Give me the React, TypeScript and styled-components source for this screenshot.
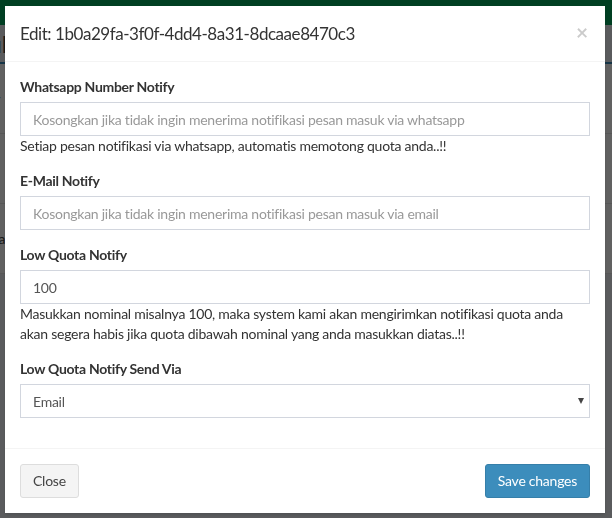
import React from "react";
import styled, { createGlobalStyle } from "styled-components";

const GlobalStyle = createGlobalStyle`
  * { box-sizing: border-box; }
  html, body {
    margin: 0;
    padding: 0;
    background: #ecf0f5;
    font-family: "Lato", "Liberation Sans", sans-serif;
    font-size: 14px;
    color: #333;
    overflow: hidden;
  }
`;

const fields = {
  whatsapp: "Kosongkan jika tidak ingin menerima notifikasi pesan masuk via whatsapp",
  email: "Kosongkan jika tidak ingin menerima notifikasi pesan masuk via email",
};

const App: React.FC = () => {
  return (
    <>
      <GlobalStyle />
      <Page>
        <Navbar />
        <ContentHeader>
          <PageTitle>Notifikasi</PageTitle>
        </ContentHeader>
        <Box>
          <Row>nomor</Row>
          <Row>e-mail</Row>
          <Row>nominal</Row>
        </Box>
      </Page>

      <Backdrop />

      <ModalWrap>
        <Modal>
          <Header>
            <Title>Edit: 1b0a29fa-3f0f-4dd4-8a31-8dcaae8470c3</Title>
            <CloseX>×</CloseX>
          </Header>

          <Body>
            <FormGroup>
              <Label>Whatsapp Number Notify</Label>
              <Input placeholder={fields.whatsapp} />
              <Help>Setiap pesan notifikasi via whatsapp, automatis memotong quota anda..!!</Help>
            </FormGroup>

            <FormGroup>
              <Label>E-Mail Notify</Label>
              <Input placeholder={fields.email} />
            </FormGroup>

            <FormGroup>
              <Label>Low Quota Notify</Label>
              <Input defaultValue="100" />
              <Help>
                Masukkan nominal misalnya 100, maka system kami akan mengirimkan notifikasi quota anda
                akan segera habis jika quota dibawah nominal yang anda masukkan diatas..!!
              </Help>
            </FormGroup>

            <FormGroup>
              <Label>Low Quota Notify Send Via</Label>
              <SelectWrap>
                <Select defaultValue="email">
                  <option value="email">Email</option>
                  <option value="whatsapp">Whatsapp</option>
                </Select>
              </SelectWrap>
            </FormGroup>
          </Body>

          <Footer>
            <Button>Close</Button>
            <Button $primary>Save changes</Button>
          </Footer>
        </Modal>
      </ModalWrap>
    </>
  );
};

export default App;

const Page = styled.div`
  width: 612px;
  height: 518px;
  display: flex;
  flex-direction: column;
`;

const Navbar = styled.div`
  height: 25px;
  background: #00a65a;
  flex-shrink: 0;
`;

const ContentHeader = styled.div`
  height: 39px;
  display: flex;
  align-items: center;
  border-bottom: 2px solid #3c8dbc;
`;

const PageTitle = styled.h1`
  margin: 0;
  font-size: 24px;
  font-weight: 400;
  color: #444;
  margin-left: -58px;
`;

const Box = styled.div`
  background: #fff;
  display: flex;
  flex-direction: column;
`;

const Row = styled.div`
  height: 70px;
  margin-left: -40px;
  display: flex;
  align-items: center;
  color: #444;
  border-bottom: 1px solid #e4e4e4;
`;

const Backdrop = styled.div`
  position: fixed;
  inset: 0;
  background: rgba(0, 0, 0, 0.62);
`;

const ModalWrap = styled.div`
  position: fixed;
  inset: 0;
  display: flex;
  justify-content: flex-start;
  padding: 6px 0 0 5px;
`;

const Modal = styled.div`
  width: 600px;
  height: fit-content;
  background: #fff;
  box-shadow: 0 2px 3px rgba(0, 0, 0, 0.125);
  display: flex;
  flex-direction: column;
  letter-spacing: -0.25px;
`;

const Header = styled.div`
  padding: 15px;
  border-bottom: 1px solid #f4f4f4;
  display: flex;
  align-items: flex-start;
  justify-content: space-between;
`;

const Title = styled.h4`
  margin: 0;
  font-size: 17px;
  font-weight: 400;
  line-height: 25px;
  letter-spacing: -0.45px;
  color: #333;
`;

const CloseX = styled.span`
  font-size: 21px;
  font-weight: 700;
  line-height: 1;
  color: #000;
  opacity: 0.2;
  margin-top: 0;
  margin-right: 2px;
`;

const Body = styled.div`
  padding: 15px 15px 0;
  display: flex;
  flex-direction: column;
`;

const FormGroup = styled.div`
  display: flex;
  flex-direction: column;
  margin-bottom: 15px;
  &:last-child {
    margin-bottom: 30px;
  }
`;

const Label = styled.label`
  font-weight: 700;
  line-height: 20px;
  margin-bottom: 5px;
  letter-spacing: -0.3px;
  color: #333;
`;

const Input = styled.input`
  height: 34px;
  width: 100%;
  padding: 6px 12px;
  border: 1px solid #d2d6de;
  border-radius: 0;
  font-family: inherit;
  font-size: 14px;
  letter-spacing: -0.25px;
  color: #555;
  outline: none;
  &::placeholder {
    color: #999;
  }
`;

const Help = styled.p`
  margin: 0;
  line-height: 20px;
  color: #333;
`;

const SelectWrap = styled.div`
  position: relative;
  &::after {
    content: "";
    position: absolute;
    right: 6px;
    top: 14px;
    border-left: 3.5px solid transparent;
    border-right: 3.5px solid transparent;
    border-top: 6px solid #444;
    pointer-events: none;
  }
`;

const Select = styled.select`
  appearance: none;
  height: 34px;
  width: 100%;
  padding: 6px 12px;
  border: 1px solid #d2d6de;
  border-radius: 0;
  background: #fff;
  font-family: inherit;
  font-size: 14px;
  letter-spacing: -0.25px;
  color: #555;
  outline: none;
`;

const Footer = styled.div`
  padding: 15px;
  border-top: 1px solid #f4f4f4;
  display: flex;
  justify-content: space-between;
`;

const Button = styled.button<{ $primary?: boolean }>`
  height: 34px;
  padding: 6px 12px;
  font-family: inherit;
  font-size: 14px;
  line-height: 20px;
  letter-spacing: -0.25px;
  border-radius: 3px;
  border: 1px solid ${(p) => (p.$primary ? "#367fa9" : "#ddd")};
  background: ${(p) => (p.$primary ? "#3c8dbc" : "#f4f4f4")};
  color: ${(p) => (p.$primary ? "#fff" : "#444")};
  box-shadow: none;
`;
